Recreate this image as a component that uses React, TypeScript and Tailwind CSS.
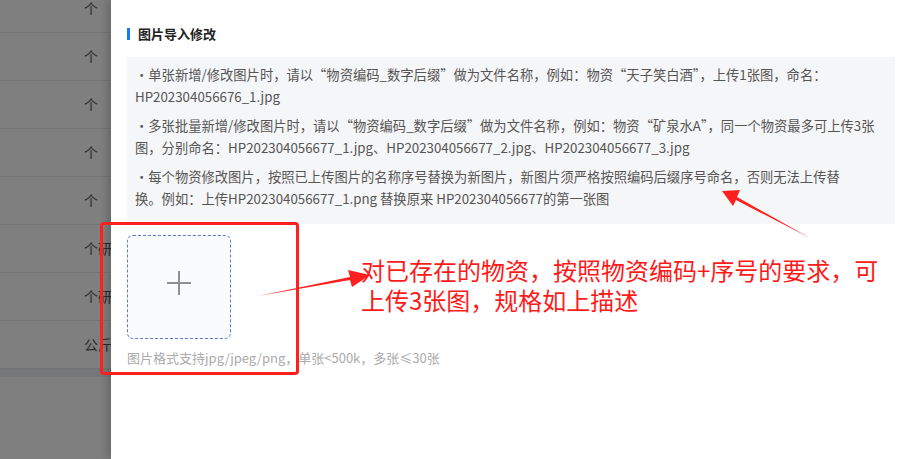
const rows = ['个', '个', '个', '个', '个', '个研', '个研', '公斤'];

const PlusIcon = () => (
  <svg width="24" height="24" viewBox="0 0 24 24" fill="none" stroke="#8f8f8f" strokeWidth="2">
    <line x1="12" y1="0" x2="12" y2="24" />
    <line x1="0" y1="12" x2="24" y2="12" />
  </svg>
);

export default function App() {
  return (
    <div
      className="relative flex w-[899px] h-[459px] overflow-hidden bg-white"
      style={{ fontFamily: '"Noto Sans CJK SC", "Liberation Sans", sans-serif' }}
    >
      {/* Masked table behind the drawer */}
      <div className="w-[111px] shrink-0 bg-[#7f7f7f] overflow-hidden">
        <div className="-mt-[15px]">
          {rows.map((r, i) => (
            <div key={i} className="h-[48px] border-b border-[#747474] flex items-center pl-[84px] text-[14px] text-[#2b2b2b] whitespace-nowrap">
              {r}
            </div>
          ))}
        </div>
        <div className="h-[8px] bg-[#75777b]" />
      </div>

      {/* Drawer */}
      <div className="flex-1 bg-white pl-[16px] pr-[4px] shadow-[-4px_0_8px_rgba(0,0,0,0.18)] z-10">
        <div className="flex items-center gap-[8px] h-[24px] mt-[22px]">
          <span className="w-[3px] h-[12px] bg-[#1677ff]" />
          <h2 className="text-[13px] font-bold text-[#222]">图片导入修改</h2>
        </div>

        <div className="mt-[11px] bg-[#f5f6f7] px-[8px] pt-[7px] pb-[7px] text-[13.3px] leading-[22px] text-[#555] whitespace-nowrap">
          <p className="mb-[7px]">
            <span className="block">•单张新增/修改图片时，请以“物资编码_数字后缀”做为文件名称，例如：物资“天子笑白酒”，上传1张图，命名：</span>
            <span className="block">HP202304056676_1.jpg</span>
          </p>
          <p className="mb-[7px]">
            <span className="block">•多张批量新增/修改图片时，请以“物资编码_数字后缀”做为文件名称，例如：物资“矿泉水A”，同一个物资最多可上传3张</span>
            <span className="block">图，分别命名：HP202304056677_1.jpg、HP202304056677_2.jpg、HP202304056677_3.jpg</span>
          </p>
          <p className="mb-[7px]">
            <span className="block">•每个物资修改图片，按照已上传图片的名称序号替换为新图片，新图片须严格按照编码后缀序号命名，否则无法上传替</span>
            <span className="block">换。例如：上传HP202304056677_1.png 替换原来 HP202304056677的第一张图</span>
          </p>
        </div>

        <div className="mt-[11px] w-[104px] h-[104px] rounded-[6px] border border-dashed border-[#5b7bd0] bg-[#fafbfd] flex items-center justify-center">
          <div className="mb-[8px]">
            <PlusIcon />
          </div>
        </div>
        <p className="mt-[9px] text-[13px] text-[#ababab]">图片格式支持jpg/jpeg/png，单张&lt;500k，多张≤30张</p>
      </div>

      {/* Annotations */}
      <div className="absolute left-[100px] top-[222px] w-[199px] h-[153px] border-[3px] border-[#ff1f1f] rounded-[4px] z-20" />
      <svg className="absolute left-0 top-0 z-20" width="899" height="459" viewBox="0 0 899 459">
        <polygon points="258,296 350,277 348,270 370,275 352,287 350,280" fill="#ff1f1f" />
        <polygon points="810,238 737,197 740,190 722,191 733,206 736,200" fill="#ff1f1f" />
      </svg>
      <div className="absolute left-[361px] top-[255px] z-20 text-[24px] leading-[30px] text-[#ff1a1a] whitespace-nowrap">
        <div>对已存在的物资，按照物资编码+序号的要求，可</div>
        <div>上传3张图，规格如上描述</div>
      </div>
    </div>
  );
}
